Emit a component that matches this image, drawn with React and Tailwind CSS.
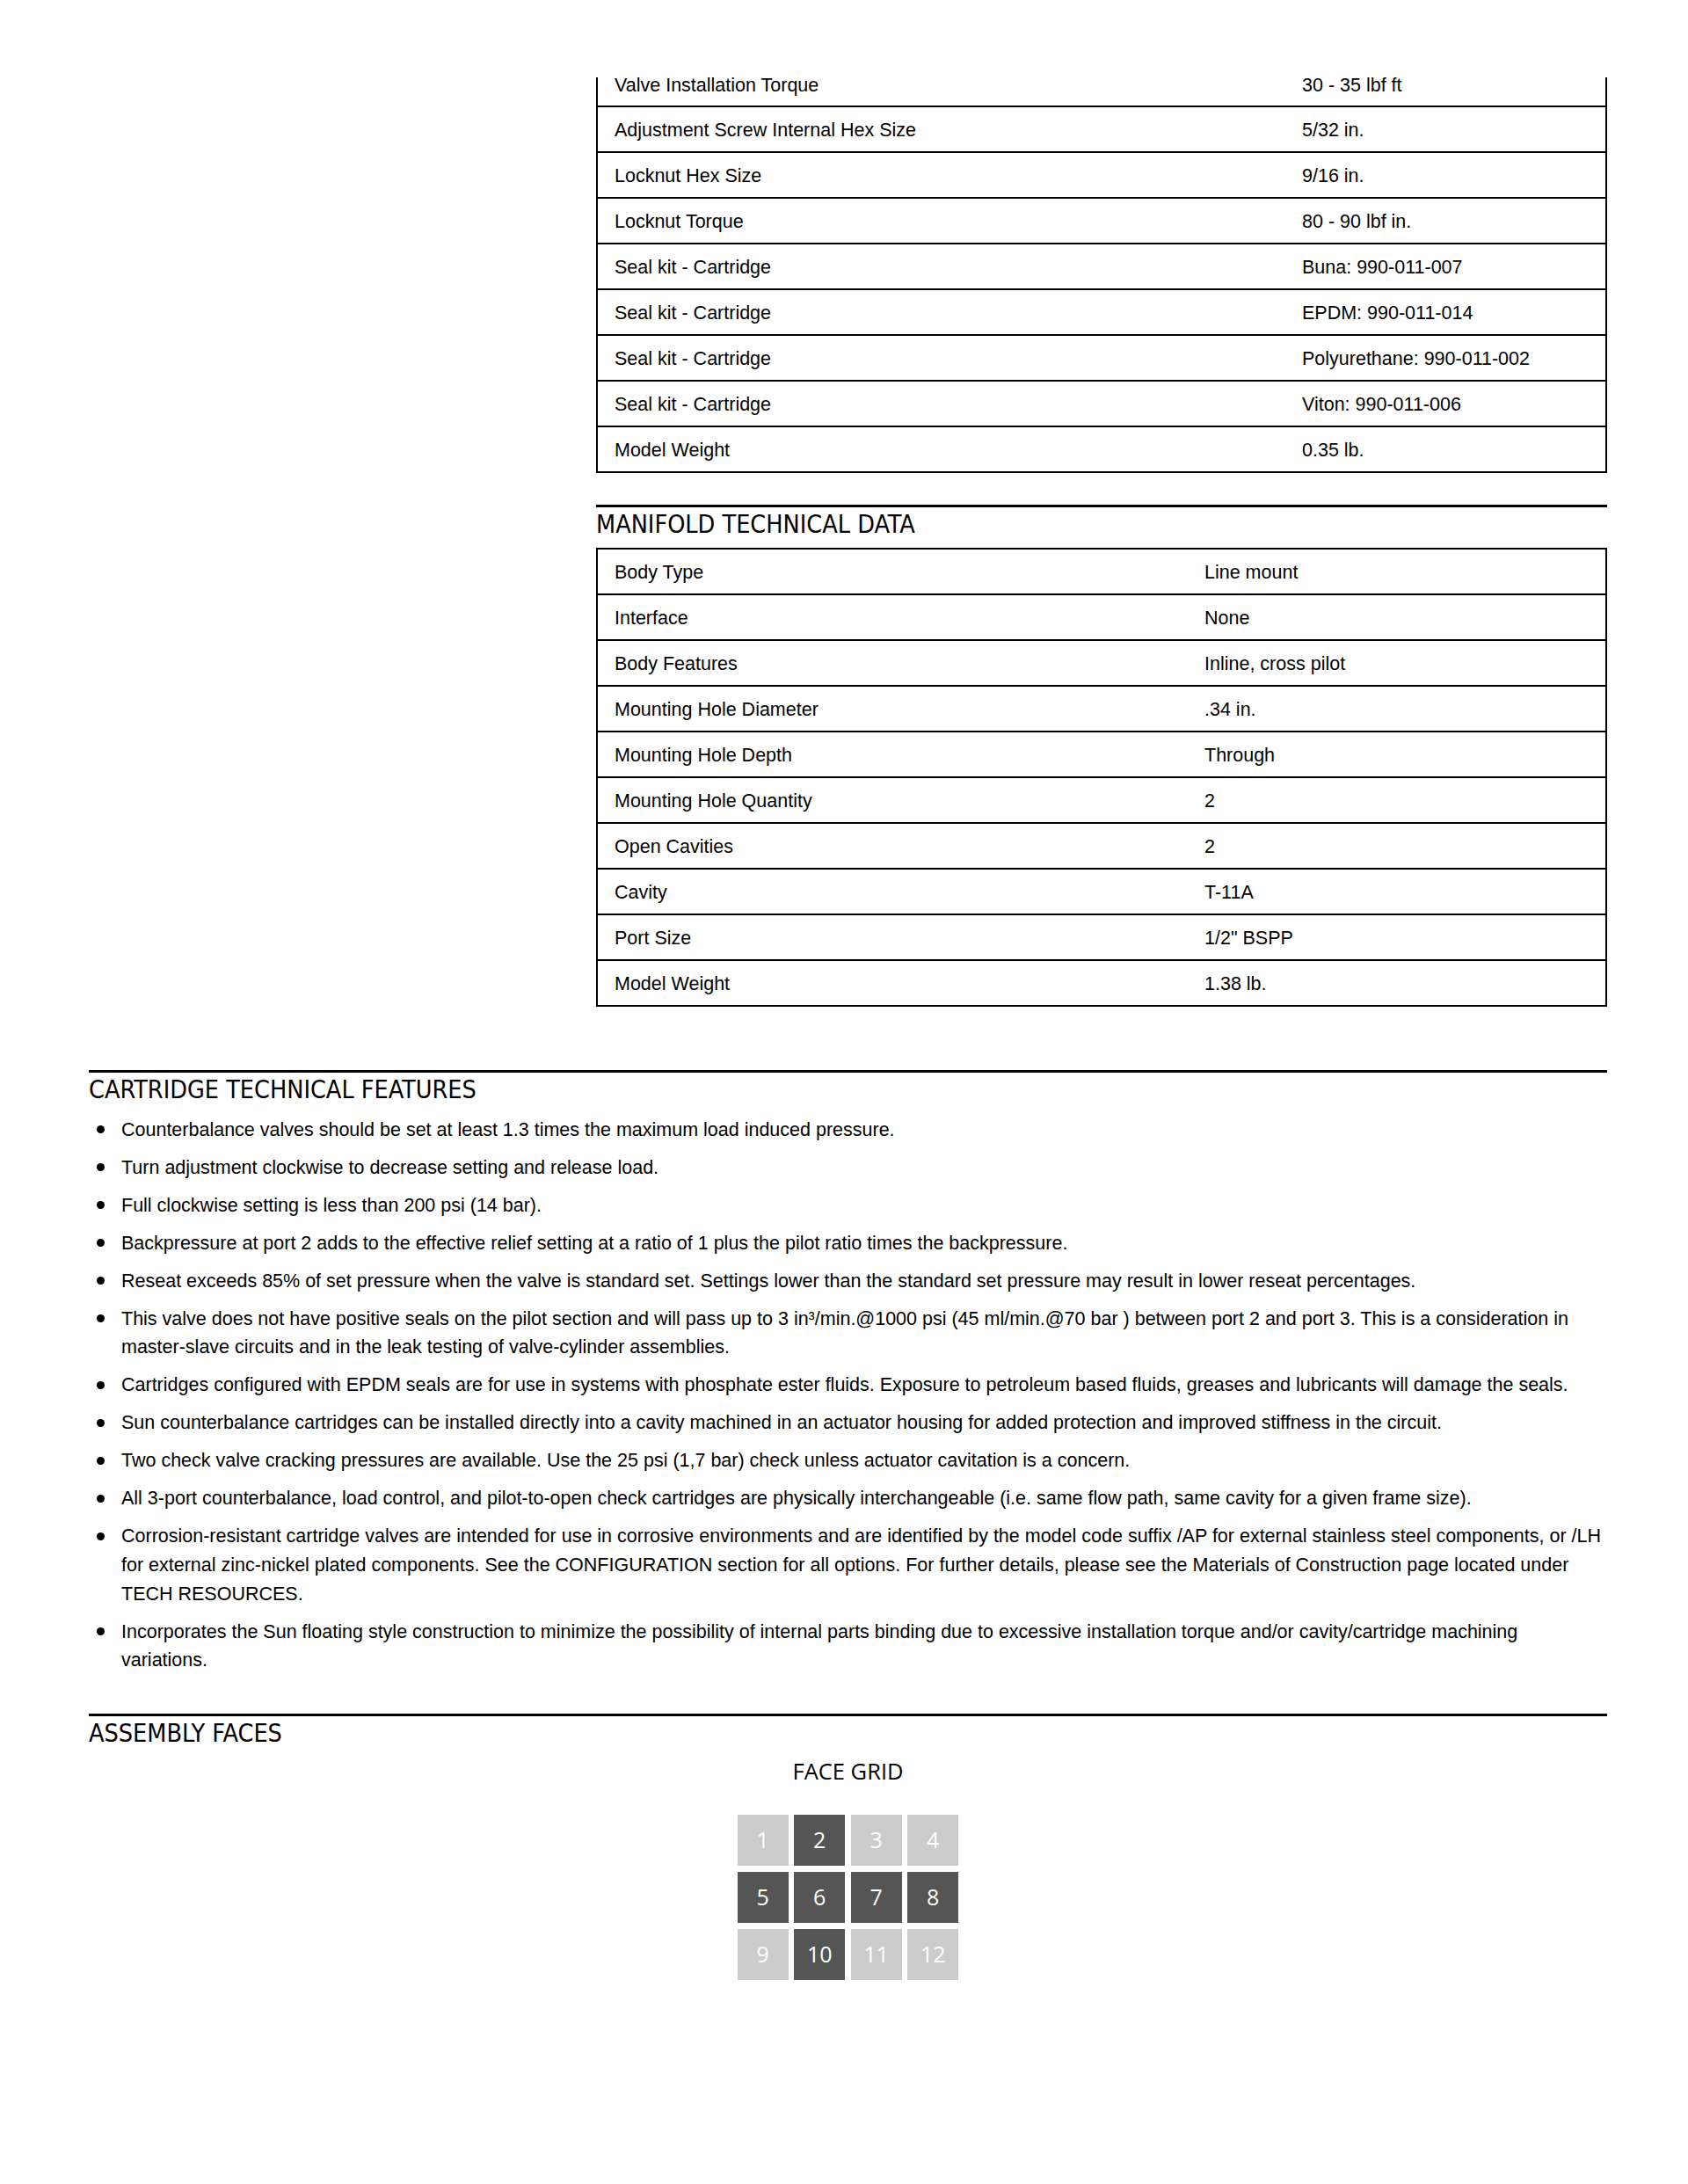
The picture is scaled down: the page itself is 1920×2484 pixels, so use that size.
import React from "react";

const SANS = { fontFamily: '"Liberation Sans", Arial, sans-serif' };
const HEAD = { fontFamily: '"DejaVu Sans Condensed", "Liberation Sans Narrow", "Open Sans", sans-serif' };
const GRIDF = { fontFamily: '"Open Sans", "Noto Sans", sans-serif' };

const t1 = [
  ["Adjustment Screw Internal Hex Size", "5/32 in."],
  ["Locknut Hex Size", "9/16 in."],
  ["Locknut Torque", "80 - 90 lbf in."],
  ["Seal kit - Cartridge", "Buna: 990-011-007"],
  ["Seal kit - Cartridge", "EPDM: 990-011-014"],
  ["Seal kit - Cartridge", "Polyurethane: 990-011-002"],
  ["Seal kit - Cartridge", "Viton: 990-011-006"],
  ["Model Weight", "0.35 lb."],
];

const t2 = [
  ["Body Type", "Line mount"],
  ["Interface", "None"],
  ["Body Features", "Inline, cross pilot"],
  ["Mounting Hole Diameter", ".34 in."],
  ["Mounting Hole Depth", "Through"],
  ["Mounting Hole Quantity", "2"],
  ["Open Cavities", "2"],
  ["Cavity", "T-11A"],
  ["Port Size", "1/2\" BSPP"],
  ["Model Weight", "1.38 lb."],
];

const bullets = [
  ["Counterbalance valves should be set at least 1.3 times the maximum load induced pressure."],
  ["Turn adjustment clockwise to decrease setting and release load."],
  ["Full clockwise setting is less than 200 psi (14 bar)."],
  ["Backpressure at port 2 adds to the effective relief setting at a ratio of 1 plus the pilot ratio times the backpressure."],
  ["Reseat exceeds 85% of set pressure when the valve is standard set. Settings lower than the standard set pressure may result in lower reseat percentages."],
  [
    "This valve does not have positive seals on the pilot section and will pass up to 3 in³/min.@1000 psi (45 ml/min.@70 bar ) between port 2 and port 3. This is a consideration in",
    "master-slave circuits and in the leak testing of valve-cylinder assemblies.",
  ],
  ["Cartridges configured with EPDM seals are for use in systems with phosphate ester fluids. Exposure to petroleum based fluids, greases and lubricants will damage the seals."],
  ["Sun counterbalance cartridges can be installed directly into a cavity machined in an actuator housing for added protection and improved stiffness in the circuit."],
  ["Two check valve cracking pressures are available. Use the 25 psi (1,7 bar) check unless actuator cavitation is a concern."],
  ["All 3-port counterbalance, load control, and pilot-to-open check cartridges are physically interchangeable (i.e. same flow path, same cavity for a given frame size)."],
  [
    "Corrosion-resistant cartridge valves are intended for use in corrosive environments and are identified by the model code suffix /AP for external stainless steel components, or /LH",
    "for external zinc-nickel plated components. See the CONFIGURATION section for all options. For further details, please see the Materials of Construction page located under",
    "TECH RESOURCES.",
  ],
  [
    "Incorporates the Sun floating style construction to minimize the possibility of internal parts binding due to excessive installation torque and/or cavity/cartridge machining",
    "variations.",
  ],
];

const dark = [2, 5, 6, 7, 8, 10];

function Row({ label, value, col }) {
  return (
    <div className="flex h-[52px] items-center border-t-2 border-black pt-[2px] text-[21.5px] text-black">
      <div className={col + " pl-[19px]"}>{label}</div>
      <div className="pl-[19px]">{value}</div>
    </div>
  );
}

function Heading({ children }) {
  return (
    <div className="border-t-[3px] border-black">
      <div className="h-[40px] text-[28.5px] leading-[40px] text-black" style={HEAD}>
        {children}
      </div>
    </div>
  );
}

export default function App() {
  return (
    <div className="min-h-[2484px] w-[1920px] bg-white pt-[88px]" style={SANS}>
      <div className="ml-[101px] w-[1727px]">
        {/* Table 1 (continued from previous page) */}
        <div className="ml-[577px] w-[1150px]">
          <div className="border-x-2 border-b-2 border-black">
            <div className="h-[32px] overflow-hidden">
              <div className="-mt-[16px] flex h-[50px] items-center text-[21.5px] text-black">
                <div className="w-[782px] pl-[19px]">Valve Installation Torque</div>
                <div className="pl-[19px]">30 - 35 lbf ft</div>
              </div>
            </div>
            {t1.map(([l, v], i) => (
              <Row key={i} label={l} value={v} col="w-[782px]" />
            ))}
          </div>

          <div className="mt-[36px]">
            <Heading>MANIFOLD TECHNICAL DATA</Heading>
          </div>
          <div className="mt-[6px] border-x-2 border-b-2 border-black">
            {t2.map(([l, v], i) => (
              <Row key={i} label={l} value={v} col="w-[671px]" />
            ))}
          </div>
        </div>

        {/* Cartridge features */}
        <div className="mt-[72px]">
          <Heading>CARTRIDGE TECHNICAL FEATURES</Heading>
          <ul className="mt-[8.5px] flex flex-col gap-[10.45px] text-[21.5px] leading-[32.6px] text-black">
            {bullets.map((lines, i) => (
              <li key={i} className="flex">
                <div className="w-[37px] shrink-0">
                  <div className="ml-[9px] mt-[11.5px] h-[9px] w-[9px] rounded-full bg-black" />
                </div>
                <div>
                  {lines.map((ln, j) => (
                    <div key={j} className="whitespace-nowrap">
                      {ln}
                    </div>
                  ))}
                </div>
              </li>
            ))}
          </ul>
        </div>

        {/* Assembly faces */}
        <div className="mt-[44px]">
          <Heading>ASSEMBLY FACES</Heading>
          <div className="mt-[5px] text-center text-[25.5px] leading-[34px] text-black" style={GRIDF}>
            FACE GRID
          </div>
          <div className="mt-[33px] flex justify-center">
            <div className="grid grid-cols-[repeat(4,58px)] gap-x-[6.5px] gap-y-[7px]" style={GRIDF}>
              {Array.from({ length: 12 }, (_, k) => k + 1).map((n) => (
                <div
                  key={n}
                  className={
                    "flex h-[58px] w-[58px] items-center justify-center text-[25px] text-white " +
                    (dark.includes(n) ? "bg-[#555555]" : "bg-[#cccccc]")
                  }
                >
                  {n}
                </div>
              ))}
            </div>
          </div>
        </div>
      </div>
    </div>
  );
}
